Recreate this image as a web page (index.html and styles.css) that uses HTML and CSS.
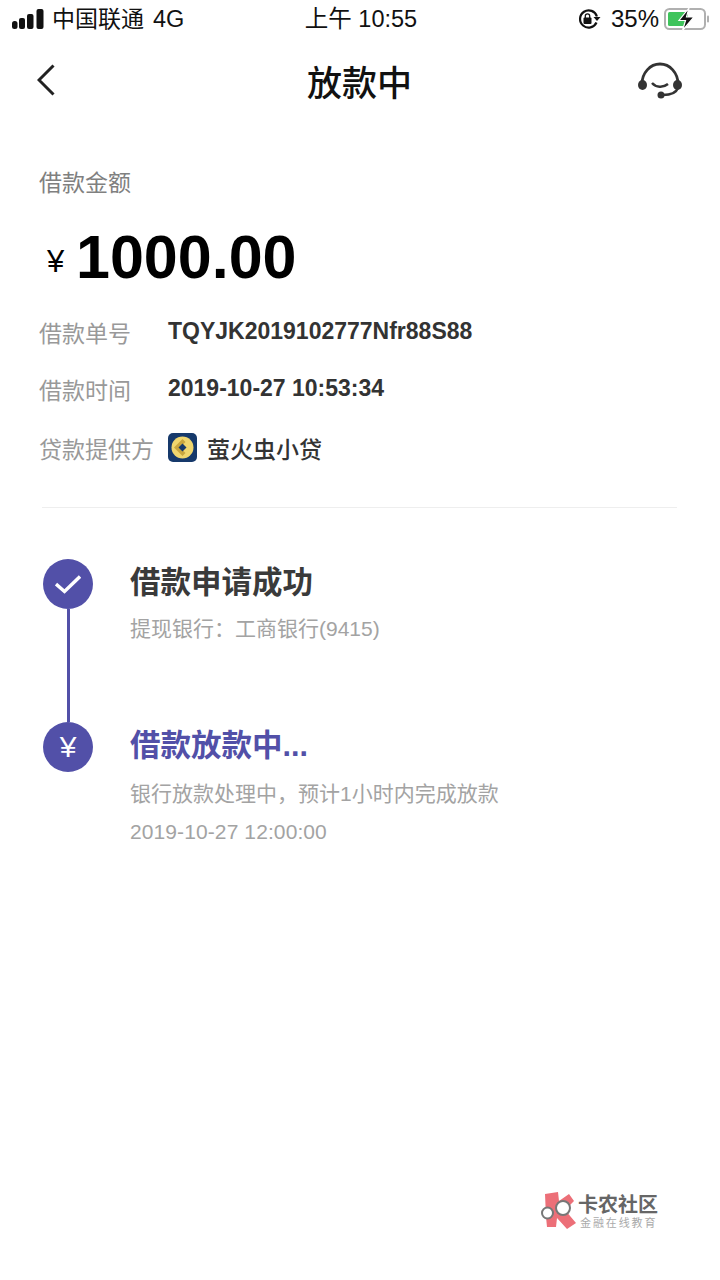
FILE: index.html
```html
<!DOCTYPE html>
<html>

<head>
    <title>放款中</title>
    <link rel="stylesheet" href="styles.css">
</head>

<body>
    <div class="status-bar">
        <div class="status-left">
            <svg class="signal" width="32" height="21" viewBox="0 0 32 21">
                <rect x="0" y="12" width="5.500" height="8" rx="2.500" fill="#111" />
                <rect x="7" y="9" width="6" height="11" rx="2" fill="#111" />
                <rect x="15" y="5" width="6.500" height="15" rx="2" fill="#111" />
                <rect x="24.500" y="0" width="7" height="20" rx="2" fill="#111" />
            </svg>
            <span class="carrier">中国联通</span>
            <span class="net">4G</span>
        </div>
        <div class="status-time">上午 10:55</div>
        <div class="status-right">
            <svg width="24" height="22" viewBox="0 0 24 22">
                <path d="M19.500 14.500a8.600 8.600 0 1 1 .4-6" fill="none" stroke="#111" stroke-width="2.200" />
                <path d="M16.500 9h7l-3.500 4z" fill="#111" />
                <rect x="6.500" y="9.500" width="8" height="6.500" rx="1" fill="#111" />
                <path d="M8.300 10V8a2.200 2.200 0 0 1 4.400 0v2" fill="none" stroke="#111" stroke-width="1.300" />
            </svg>
            <span class="percent">35%</span>
            <svg width="46" height="24" viewBox="0 0 46 24">
                <rect x="1" y="2" width="40" height="20" rx="4.500" fill="none" stroke="#b0b0b0" stroke-width="2" />
                <rect x="43" y="8.500" width="2" height="7" rx="1" fill="#b0b0b0" />
                <rect x="4" y="5" width="20" height="14" rx="1.500" fill="#3fc45c" />
                <path d="M25 1 15 13.500h6.500L18.500 23.500 30 10h-7.500z" fill="#111" stroke="#fff" stroke-width="1.200" />
            </svg>
        </div>
    </div>

    <div class="nav">
        <div class="nav-side">
            <svg width="22" height="34" viewBox="0 0 22 34">
                <path d="M16.500 2.500 2 17 16.500 31.500" fill="none" stroke="#222" stroke-width="3" />
            </svg>
        </div>
        <h1>放款中</h1>
        <div class="nav-side nav-side-right">
            <svg width="44" height="40" viewBox="0 0 44 40">
                <path d="M4 24a18 20 0 0 1 36 0" fill="none" stroke="#333" stroke-width="2.800" />
                <ellipse cx="4.500" cy="25" rx="4.500" ry="5" fill="#333" />
                <ellipse cx="39.500" cy="25" rx="4.500" ry="5" fill="#333" />
                <path d="M14 23c4 4.500 11 5 16 1" fill="none" stroke="#333" stroke-width="2.500" />
                <path d="M40 28c-2 5-8 7-15 7" fill="none" stroke="#333" stroke-width="2.500" />
                <circle cx="23" cy="35" r="3.500" fill="#333" />
            </svg>
        </div>
    </div>

    <section class="summary">
        <div class="summary-title">借款金额</div>
        <div class="amount"><span class="currency">¥</span><span class="money">1000.00</span></div>
        <div class="info-row">
            <span class="info-label">借款单号</span>
            <span class="info-value">TQYJK2019102777Nfr88S88</span>
        </div>
        <div class="info-row">
            <span class="info-label">借款时间</span>
            <span class="info-value">2019-10-27 10:53:34</span>
        </div>
        <div class="info-row lender-row">
            <span class="info-label">贷款提供方</span>
            <svg class="lender-logo" width="29" height="29" viewBox="0 0 29 29">
                <rect width="29" height="29" rx="5" fill="#16396b" />
                <circle cx="14.500" cy="14.500" r="11" fill="#f0d66e" />
                <path d="M14.500 6 6 14.500l8.500 8.500 3-3-5.500-5.500 5.500-5.500z" fill="#c9a63e" />
                <path d="M14.500 10.500l4 4-4 4-4-4z" fill="#16396b" />
            </svg>
            <span class="lender-name">萤火虫小贷</span>
        </div>
    </section>

    <div class="divider"></div>

    <section class="timeline">
        <div class="step step-done">
            <div class="step-mark">
                <div class="dot">
                    <svg width="26" height="20" viewBox="0 0 26 20">
                        <path d="M1 10l8.500 7.500L25 2.500" fill="none" stroke="#fff" stroke-width="3.400" />
                    </svg>
                </div>
                <div class="step-line"></div>
            </div>
            <div class="step-body">
                <div class="step-title">借款申请成功</div>
                <div class="step-text">提现银行：工商银行(9415)</div>
            </div>
        </div>
        <div class="step">
            <div class="step-mark">
                <div class="dot dot-yen">¥</div>
            </div>
            <div class="step-body">
                <div class="step-title step-active">借款放款中...</div>
                <div class="step-text">银行放款处理中，预计1小时内完成放款</div>
                <div class="step-text step-date">2019-10-27 12:00:00</div>
            </div>
        </div>
    </section>

    <div class="watermark">
        <svg width="36" height="38" viewBox="0 0 36 38">
            <path d="M4 3 17 1l1 9L28 3l5 7-9 9 11 13-9 6-10-11-1 9H6l-1-10z" fill="#ec6f78" />
            <circle cx="6.500" cy="22" r="5.500" fill="#fff" stroke="#777" stroke-width="2" />
            <circle cx="22" cy="17" r="7" fill="#fff" stroke="#777" stroke-width="2" />
        </svg>
        <div class="watermark-text">
            <div class="watermark-name">卡农社区</div>
            <div class="watermark-sub">金融在线教育</div>
        </div>
    </div>
</body>

</html>
```

FILE: styles.css
```css
* {
    box-sizing: border-box;
}

body {
    margin: 0;
    height: 1280px;
    position: relative;
    overflow: hidden;
    background-color: white;
    color: #333;
    font-family: "Liberation Sans", "Noto Sans CJK SC", sans-serif;
}

.status-bar {
    height: 38px;
    padding: 0 10px 0 12px;
    display: flex;
    justify-content: space-between;
    align-items: center;
    color: #111;
}

.status-left {
    width: 250px;
    display: flex;
    align-items: center;
    line-height: 30px;
}

.signal {
    margin-right: 8px;
}

.carrier {
    font-size: 23px;
}

.net {
    margin-left: 9px;
    font-size: 23.500px;
}

.status-time {
    font-size: 23.500px;
    line-height: 30px;
}

.status-right {
    width: 250px;
    display: flex;
    justify-content: flex-end;
    align-items: center;
}

.percent {
    margin: 0 5px 0 10px;
    font-size: 24px;
    line-height: 30px;
}

.nav {
    height: 84px;
    padding: 0 38px 0 37px;
    display: flex;
    justify-content: space-between;
    align-items: center;
}

.nav-side {
    width: 60px;
    display: flex;
}

.nav-side-right {
    justify-content: flex-end;
}

.nav h1 {
    margin: 0;
    font-size: 35px;
    font-weight: 500;
    color: #111;
}

.summary {
    padding: 44px 39px 0;
}

.summary-title {
    font-size: 23px;
    line-height: 34px;
    color: #808080;
}

.amount {
    margin: 20px 0 9px;
    height: 74px;
    padding-left: 8px;
    display: flex;
    align-items: center;
    color: black;
}

.currency {
    font-size: 31px;
    width: 29px;
    margin-top: 10px;
}

.money {
    font-size: 61px;
    font-weight: bold;
}

.info-row {
    height: 57px;
    display: flex;
    align-items: center;
}

.lender-row {
    margin-top: 2px;
}

.info-label {
    width: 129px;
    font-size: 23px;
    color: #999;
}

.info-value {
    font-size: 23px;
    font-weight: bold;
    color: #333;
}

.lender-logo {
    margin-right: 10px;
}

.lender-name {
    font-size: 23px;
    font-weight: 500;
}

.divider {
    height: 1px;
    margin: 31px 43px 0 42px;
    background-color: #eee;
}

.timeline {
    padding: 51px 0 0 43px;
}

.step {
    display: flex;
}

.step-done {
    height: 163px;
}

.step-mark {
    width: 50px;
    margin-right: 37px;
    display: flex;
    flex-direction: column;
    align-items: center;
}

.dot {
    width: 50px;
    height: 50px;
    flex-shrink: 0;
    border-radius: 50%;
    display: flex;
    justify-content: center;
    align-items: center;
    background-color: #5250a8;
    color: white;
}

.dot-yen {
    font-size: 30px;
}

.step-line {
    width: 3px;
    flex-grow: 1;
    background-color: #5250a8;
}

.step-title {
    height: 46px;
    font-size: 30.500px;
    line-height: 46px;
    font-weight: bold;
    color: #3a3a3a;
}

.step-active {
    color: #5250a8;
}

.step-text {
    margin-top: 10px;
    font-size: 21px;
    line-height: 32px;
    color: #a3a3a3;
}

.step-done .step-text {
    margin-top: 8px;
}

.step-date {
    margin-top: 6px;
    letter-spacing: 0.100px;
}

.watermark {
    position: absolute;
    left: 541px;
    top: 1191px;
    display: flex;
    gap: 1px;
}

.watermark-name {
    margin-top: 2px;
    font-size: 20px;
    line-height: 24px;
    font-weight: bold;
    color: #666;
}

.watermark-sub {
    margin-left: 2px;
    font-size: 11px;
    line-height: 13px;
    letter-spacing: 1.900px;
    color: #aaa;
}
```
